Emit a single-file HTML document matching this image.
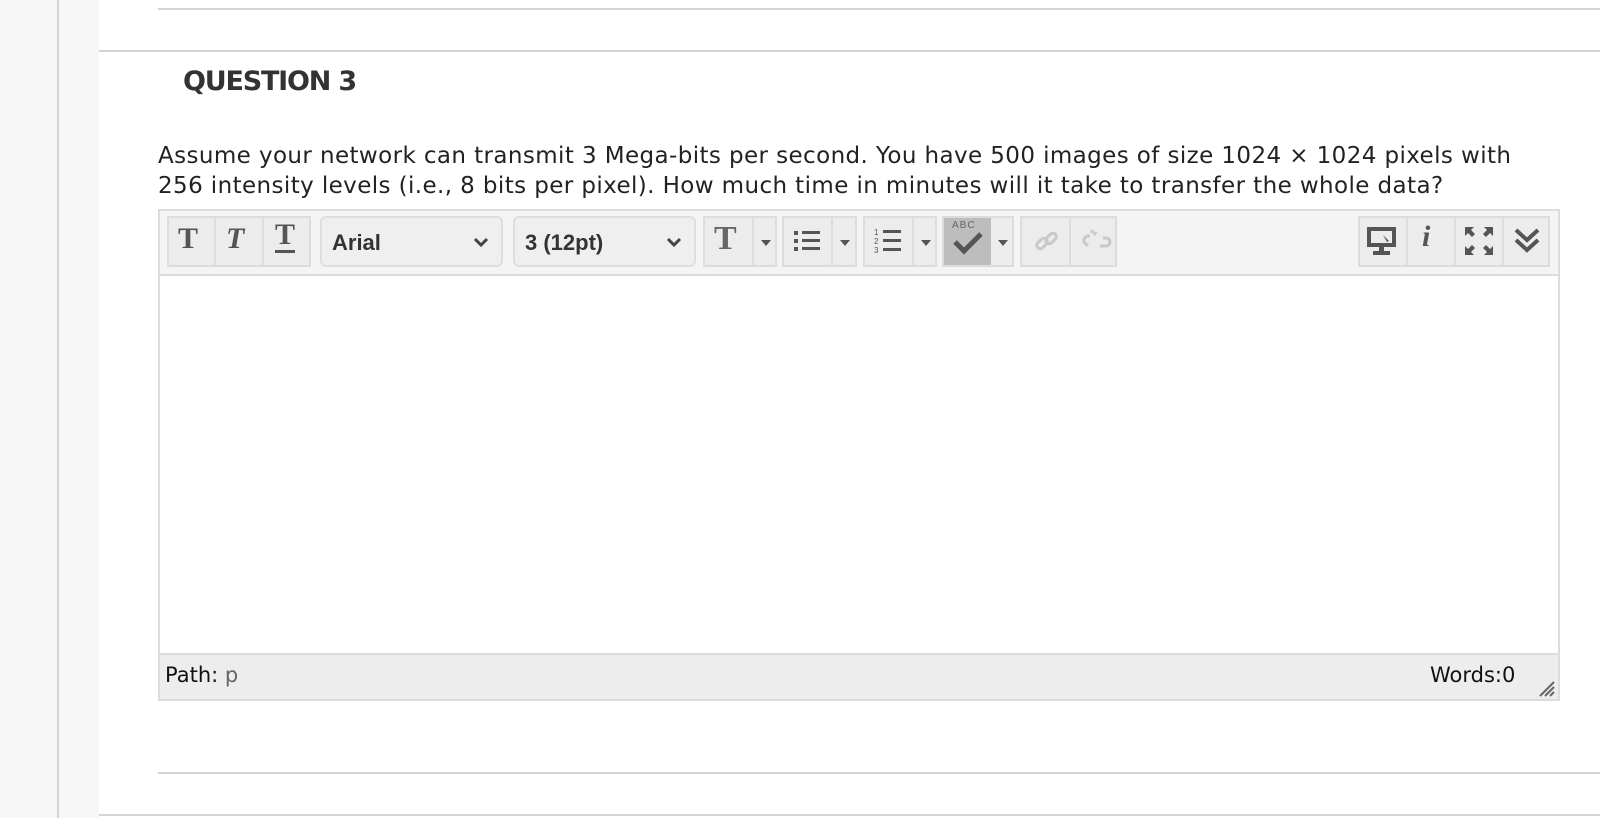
<!DOCTYPE html>
<html><head><meta charset="utf-8"><style>
*{margin:0;padding:0;box-sizing:border-box}
body{width:1600px;height:818px;background:#fff;position:relative;overflow:hidden;font-family:"Liberation Sans",Arial,sans-serif}
.abs{position:absolute}
.btn{position:absolute;top:216px;height:51px;background:#ececec;border:2px solid #dcdcdc;}
.sel{position:absolute;top:216px;height:51px;background:#efefef;border:2px solid #dedede;border-radius:6px;font-weight:bold;font-size:22px;color:#333;padding:12px 0 0 10px}
.sel svg{position:absolute;right:12px;top:18px}
.dd{position:absolute;top:22px;width:0;height:0;border-left:5px solid transparent;border-right:5px solid transparent;border-top:6px solid #555}
</style></head><body>
<div class="abs" style="left:0;top:0;width:99px;height:818px;background:#f7f7f7"></div>
<div class="abs" style="left:57px;top:0;width:2px;height:818px;background:#d4d4d4"></div>
<div class="abs" style="left:158px;top:8px;width:1442px;height:2px;background:#d4d4d4"></div>
<div class="abs" style="left:99px;top:50px;width:1501px;height:2px;background:#d4d4d4"></div>
<div class="abs" style="left:158px;top:772px;width:1442px;height:2px;background:#d4d4d4"></div>
<div class="abs" style="left:99px;top:814px;width:1501px;height:2px;background:#d4d4d4"></div>

<div class="abs" style="left:183px;top:66px;font-size:27px;font-weight:bold;color:#333;font-family:'DejaVu Sans',sans-serif;letter-spacing:-1.2px">QUESTION 3</div>
<div class="abs" style="left:158px;top:141px;font-size:23px;line-height:30px;color:#222;white-space:nowrap;letter-spacing:0.4px;font-family:'DejaVu Sans',sans-serif">Assume your network can transmit 3 Mega-bits per second. You have 500 images of size 1024 × 1024 pixels with<br>256 intensity levels (i.e., 8 bits per pixel). How much time in minutes will it take to transfer the whole data?</div>

<div class="abs" style="left:158px;top:209px;width:1402px;height:492px;border:2px solid #dcdcdc;background:#fff"></div>
<div class="abs" style="left:160px;top:211px;width:1398px;height:65px;background:#f4f4f4;border-bottom:2px solid #dcdcdc"></div>
<div class="abs" style="left:160px;top:653px;width:1398px;height:46px;background:#ededed;border-top:2px solid #dcdcdc"></div>
<div class="abs" style="left:165px;top:663px;font-size:21px;color:#111;font-family:'DejaVu Sans',sans-serif">Path: <span style="color:#666">p</span></div>
<div class="abs" style="left:1430px;top:663px;font-size:21px;color:#111;font-family:'DejaVu Sans',sans-serif">Words:0</div>
<svg class="abs" style="left:1538px;top:680px" width="18" height="18"><path d="M2 16L16 2M7 16L16 7M12 16L16 12" stroke="#666" stroke-width="2"/></svg>

<div class="btn" style="left:167px;width:144px"></div>
<div class="abs" style="left:214px;top:218px;width:2px;height:47px;background:#dcdcdc"></div>
<div class="abs" style="left:262px;top:218px;width:2px;height:47px;background:#dcdcdc"></div>
<div class="abs" style="left:178px;top:222px;font:bold 30px 'Liberation Serif',serif;color:#555">T</div>
<div class="abs" style="left:226px;top:222px;font:italic bold 30px 'Liberation Serif',serif;color:#555">T</div>
<div class="abs" style="left:275px;top:220px;font:bold 30px 'Liberation Serif',serif;color:#555;border-bottom:3px solid #555;line-height:30px">T</div>

<div class="sel" style="left:320px;width:183px">Arial<svg width="16" height="12"><path d="M2 3l6 6 6-6" stroke="#444" stroke-width="3" fill="none"/></svg></div>
<div class="sel" style="left:513px;width:183px;font-weight:bold">3 (12pt)<svg width="16" height="12"><path d="M2 3l6 6 6-6" stroke="#444" stroke-width="3" fill="none"/></svg></div>

<div class="btn" style="left:703px;width:74px"><div class="abs" style="left:47px;top:0;width:2px;height:47px;background:#dcdcdc"></div>
<div class="abs" style="left:9px;top:2px;font:bold 34px 'Liberation Serif',serif;color:#666">T</div><div class="dd" style="left:56px"></div></div>
<div class="btn" style="left:782px;width:75px"><div class="abs" style="left:47px;top:0;width:2px;height:47px;background:#dcdcdc"></div>
<svg class="abs" style="left:8px;top:10px" width="30" height="26"><g fill="#555"><rect x="2" y="3" width="4" height="4"/><rect x="2" y="11" width="4" height="4"/><rect x="2" y="19" width="4" height="4"/><rect x="10" y="3" width="18" height="3"/><rect x="10" y="11" width="18" height="3"/><rect x="10" y="19" width="18" height="3"/></g></svg><div class="dd" style="left:56px"></div></div>
<div class="btn" style="left:863px;width:74px"><div class="abs" style="left:47px;top:0;width:2px;height:47px;background:#dcdcdc"></div>
<svg class="abs" style="left:8px;top:8px" width="30" height="30"><g fill="#555"><text x="1" y="9" font-size="8" font-family="Liberation Sans">1</text><text x="1" y="18" font-size="8" font-family="Liberation Sans">2</text><text x="1" y="27" font-size="8" font-family="Liberation Sans">3</text><rect x="10" y="4" width="18" height="3"/><rect x="10" y="13" width="18" height="3"/><rect x="10" y="22" width="18" height="3"/></g></svg><div class="dd" style="left:56px"></div></div>
<div class="btn" style="left:942px;width:72px"><div class="abs" style="left:0;top:0;width:47px;height:47px;background:#bdbdbd"></div>
<div class="abs" style="left:8px;top:2px;font-size:10px;color:#666;letter-spacing:1px">ABC</div>
<svg class="abs" style="left:8px;top:12px" width="32" height="26"><path d="M3 12l9 9L29 4" stroke="#555" stroke-width="5" fill="none"/></svg><div class="dd" style="left:54px"></div></div>
<div class="btn" style="left:1020px;width:97px"><div class="abs" style="left:47px;top:0;width:2px;height:47px;background:#dcdcdc"></div>
<svg class="abs" style="left:11px;top:10px" width="28" height="28"><g stroke="#c8c8c8" stroke-width="3" fill="none"><rect x="3" y="12" width="12" height="7" rx="3.5" transform="rotate(-45 9 15.5)"/><rect x="12" y="7" width="12" height="7" rx="3.5" transform="rotate(-45 18 10.5)"/></g></svg>
<svg class="abs" style="left:58px;top:10px" width="32" height="28"><g stroke="#c8c8c8" stroke-width="3" fill="none"><path d="M10 8a5 5 0 0 0-6 6l4 4M20 18h6a4 4 0 0 0 0-8h-3M12 2v3M16 4l-2 3"/></g></svg></div>

<div class="btn" style="left:1358px;width:192px"></div>
<div class="abs" style="left:1406px;top:218px;width:2px;height:47px;background:#dcdcdc"></div>
<div class="abs" style="left:1454px;top:218px;width:2px;height:47px;background:#dcdcdc"></div>
<div class="abs" style="left:1502px;top:218px;width:2px;height:47px;background:#dcdcdc"></div>
<svg class="abs" style="left:1366px;top:226px" width="32" height="32"><g fill="#555"><path d="M1 1h29v20H1zM5 5v12h21V5z" fill-rule="evenodd"/><path d="M13 21h5v4h-5zM7 25h17v4H7z"/><path d="M17 9l6 6-2 1z"/></g></svg>
<div class="abs" style="left:1422px;top:220px;font:italic bold 30px 'Liberation Serif',serif;color:#555">i</div>
<svg class="abs" style="left:1464px;top:226px" width="30" height="30"><g fill="#555"><path d="M1 1h9l-3 3 4 4-3 3-4-4-3 3zM29 1v9l-3-3-4 4-3-3 4-4-3-3zM1 29v-9l3 3 4-4 3 3-4 4 3 3zM29 29h-9l3-3-4-4 3-3 4 4 3-3z"/></g></svg>
<svg class="abs" style="left:1513px;top:226px" width="30" height="30"><path d="M3 4l11 10 11-10M3 14l11 10 11-10" stroke="#555" stroke-width="4" fill="none"/></svg>
</body></html>
